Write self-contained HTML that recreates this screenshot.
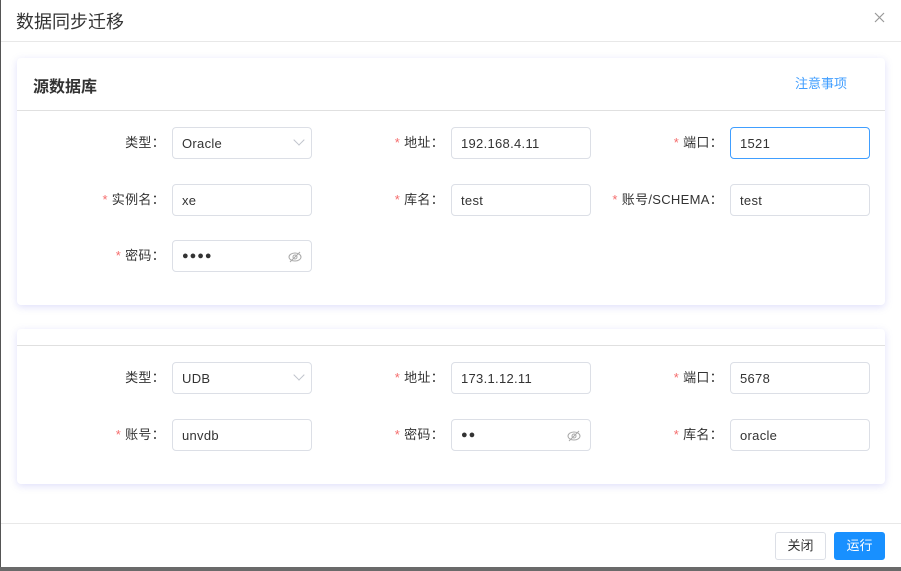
<!DOCTYPE html>
<html><head><meta charset="utf-8"><style>
*{box-sizing:border-box;margin:0;padding:0}
body{width:901px;height:571px;background:#fff;font-family:"Liberation Sans","Noto Sans CJK SC",sans-serif;position:relative;overflow:hidden;color:#333}
.lb{position:absolute;left:0;top:0;width:1px;height:567px;background:#555}
.bot{position:absolute;left:0;top:567px;width:901px;height:4px;background:#6a6a6a}
.title{position:absolute;left:16px;top:8px;font-size:18px;color:#333}
.close{position:absolute;left:874px;top:12px}
.hline{position:absolute;left:1px;top:41px;width:900px;height:1px;background:#e8e8e8}
.card{position:absolute;left:17px;width:868px;background:#fff;border-radius:4px;box-shadow:0 2px 8px rgba(110,110,230,.22)}
.ch{position:absolute;left:0;width:100%;height:1px;background:#e0e0e0}
.lab{position:absolute;font-size:13px;color:#333;text-align:right;width:130px;line-height:32px;letter-spacing:.3px}
.lab i{color:#f56c6c;font-style:normal;margin-right:4px}
.in{position:absolute;width:140px;height:32px;border:1px solid #dcdfe6;border-radius:4px;font-size:13px;line-height:31px;padding-left:9px;color:#333;letter-spacing:.3px}
.in.f{border-color:#409eff}
.arr{position:absolute;right:8px;top:8px;width:8px;height:8px;border-right:1px solid #c0c4cc;border-bottom:1px solid #c0c4cc;transform:rotate(45deg)}
.eye{position:absolute;right:9px;top:9px}
.pw{font-size:11px;letter-spacing:1px}
.btn{position:absolute;top:532px;height:28px;width:51px;border-radius:3px;font-size:13px;text-align:center;line-height:26px}
</style></head><body>
<div class="lb"></div><div class="bot"></div>
<div class="title">数据同步迁移</div>
<svg class="close" width="11" height="11" viewBox="0 0 11 11"><path d="M1 1L10 10M10 1L1 10" stroke="#999" stroke-width="1.2"/></svg>
<div class="hline"></div>

<div class="card" style="top:58px;height:247px">
 <div style="position:absolute;left:16px;top:15px;font-size:16px;font-weight:bold;color:#333">源数据库</div>
 <div style="position:absolute;left:778px;top:15px;font-size:13px;color:#409eff">注意事项</div>
 <div class="ch" style="top:52px"></div>
</div>
<div class="card" style="top:329px;height:155px">
 <div class="ch" style="top:16px"></div>
</div>

<div class="lab" style="left:35px;top:127px">类型：</div>
<div class="in" style="left:172px;top:127px">Oracle<div class="arr"></div></div>
<div class="lab" style="left:314px;top:127px"><i>*</i>地址：</div>
<div class="in" style="left:451px;top:127px">192.168.4.11</div>
<div class="lab" style="left:593px;top:127px"><i>*</i>端口：</div>
<div class="in f" style="left:730px;top:127px">1521</div>

<div class="lab" style="left:35px;top:184px"><i>*</i>实例名：</div>
<div class="in" style="left:172px;top:184px">xe</div>
<div class="lab" style="left:314px;top:184px"><i>*</i>库名：</div>
<div class="in" style="left:451px;top:184px">test</div>
<div class="lab" style="left:563px;top:184px;width:160px"><i>*</i>账号/SCHEMA：</div>
<div class="in" style="left:730px;top:184px">test</div>

<div class="lab" style="left:35px;top:240px"><i>*</i>密码：</div>
<div class="in pw" style="left:172px;top:240px">●●●●<svg class="eye" width="14" height="14" viewBox="0 0 14 14"><ellipse cx="7" cy="7" rx="6" ry="4" fill="none" stroke="#aaa"/><circle cx="7" cy="7" r="2" fill="none" stroke="#aaa"/><line x1="2" y1="12" x2="12" y2="2" stroke="#aaa"/></svg></div>

<div class="lab" style="left:35px;top:362px">类型：</div>
<div class="in" style="left:172px;top:362px">UDB<div class="arr"></div></div>
<div class="lab" style="left:314px;top:362px"><i>*</i>地址：</div>
<div class="in" style="left:451px;top:362px">173.1.12.11</div>
<div class="lab" style="left:593px;top:362px"><i>*</i>端口：</div>
<div class="in" style="left:730px;top:362px">5678</div>

<div class="lab" style="left:35px;top:419px"><i>*</i>账号：</div>
<div class="in" style="left:172px;top:419px">unvdb</div>
<div class="lab" style="left:314px;top:419px"><i>*</i>密码：</div>
<div class="in pw" style="left:451px;top:419px">●●<svg class="eye" width="14" height="14" viewBox="0 0 14 14"><ellipse cx="7" cy="7" rx="6" ry="4" fill="none" stroke="#aaa"/><circle cx="7" cy="7" r="2" fill="none" stroke="#aaa"/><line x1="2" y1="12" x2="12" y2="2" stroke="#aaa"/></svg></div>
<div class="lab" style="left:593px;top:419px"><i>*</i>库名：</div>
<div class="in" style="left:730px;top:419px">oracle</div>

<div class="hline" style="top:523px"></div>
<div class="btn" style="left:775px;border:1px solid #dcdfe6;color:#333">关闭</div>
<div class="btn" style="left:834px;background:#1890ff;border:1px solid #1890ff;color:#fff">运行</div>
</body></html>
